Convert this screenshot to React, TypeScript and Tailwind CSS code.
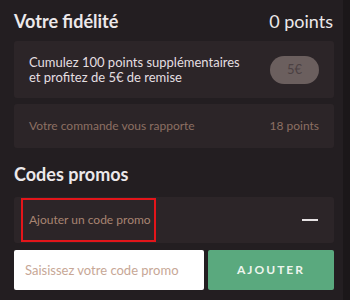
import React from 'react';

export default function App() {
  return (
    <div className="flex h-[300px] w-[350px] overflow-hidden bg-[#1b1719] font-['Lato',sans-serif]">
      <div className="w-[343px] bg-[#231e21] pl-[14px] pr-[9px] pt-[10px] text-[#ece8ea]">
        {/* Fidélité */}
        <div className="flex h-[22px] items-center justify-between pr-[1px]">
          <h2 className="text-[18px] font-bold">Votre fidélité</h2>
          <span className="text-[18px]">0 points</span>
        </div>

        <div className="mt-[9px] flex h-[57px] items-center justify-between rounded-[3px] bg-[#2c2528] px-[15px]">
          <p className="text-[13px] leading-[15px] text-[#e4dfe1]">
            Cumulez 100 points supplémentaires
            <br />
            et profitez de 5€ de remise
          </p>
          <span className="flex h-[28px] w-[49px] items-center justify-center rounded-full bg-[#6b5f5e] text-[13px] text-[#4b4143]">
            5€
          </span>
        </div>

        <div className="mt-[6px] flex h-[44px] items-center justify-between rounded-[3px] bg-[#2c2528] px-[15px] text-[12px] text-[#8c7063]">
          <span>Votre commande vous rapporte</span>
          <span>18 points</span>
        </div>

        {/* Codes promos */}
        <h2 className="mt-[15px] h-[22px] text-[18px] font-bold leading-[22px]">Codes promos</h2>

        <div className="relative mt-[12px] flex h-[46px] items-center justify-between rounded-[3px] bg-[#2c2528] pl-[15px] pr-[16px]">
          <span className="text-[12px] text-[#a88472]">Ajouter un code promo</span>
          <span className="h-[1.5px] w-[16px] bg-[#e6e2e4]" />
          <div className="pointer-events-none absolute left-[7px] top-[1px] h-[44px] w-[135px] border-2 border-[#e3151a]" />
        </div>

        <div className="mt-[7px] flex gap-[4px]">
          <input
            type="text"
            placeholder="Saisissez votre code promo"
            className="h-[40px] w-[190px] rounded-[2px] bg-white px-[11px] text-[13px] text-[#333] outline-none placeholder:text-[#c7a796]"
          />
          <button className="flex h-[40px] flex-1 items-center justify-center rounded-[2px] bg-[#5aa97e] text-[12px] font-bold tracking-[2px] text-[#eef5ee]">
            AJOUTER
          </button>
        </div>
      </div>
    </div>
  );
}
